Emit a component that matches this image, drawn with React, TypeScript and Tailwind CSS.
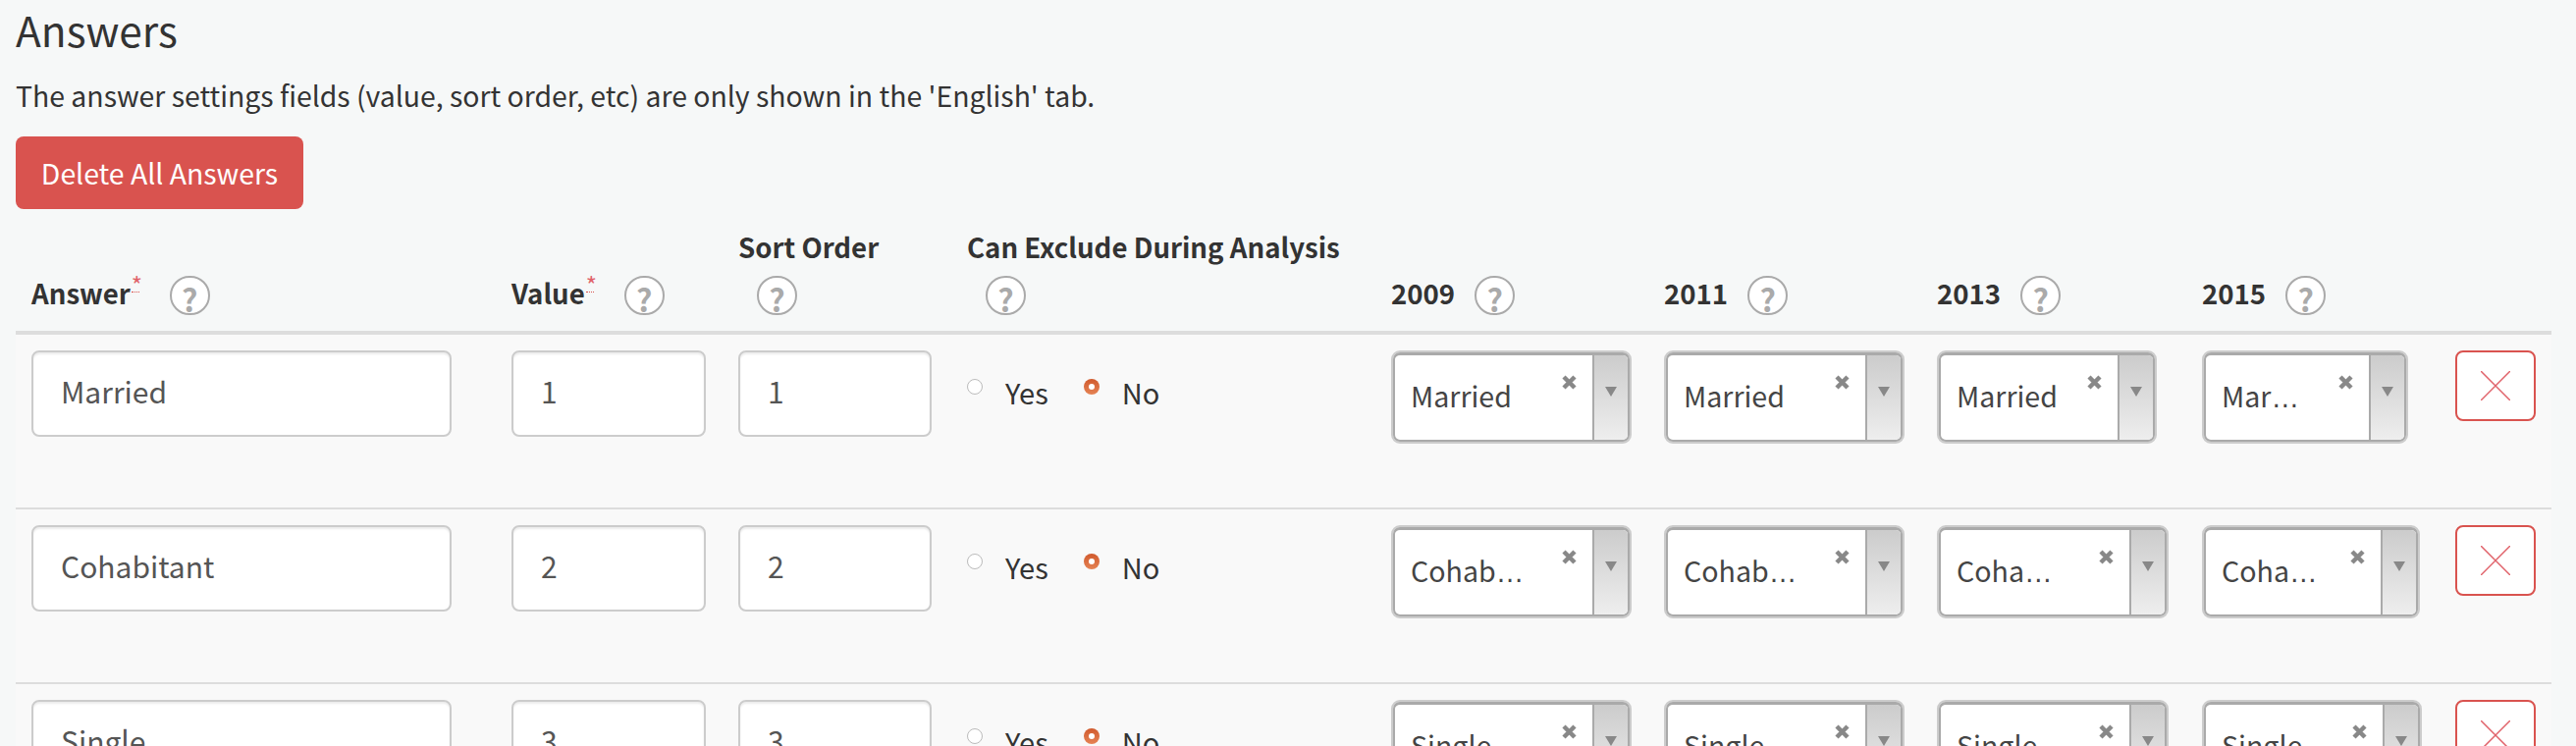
import { useState } from 'react'

type Choice = { label: string; cut?: boolean; width: string }

type Row = {
  answer: string
  value: string
  selects: Choice[]
}

const rows: Row[] = [
  {
    answer: 'Married',
    value: '1',
    selects: [
      { label: 'Married', width: 'w-[245px]' },
      { label: 'Married', width: 'w-[245px]' },
      { label: 'Married', width: 'w-[224px]' },
      { label: 'Mar', cut: true, width: 'w-[210px]' },
    ],
  },
  {
    answer: 'Cohabitant',
    value: '2',
    selects: [
      { label: 'Cohab', cut: true, width: 'w-[245px]' },
      { label: 'Cohab', cut: true, width: 'w-[245px]' },
      { label: 'Coha', cut: true, width: 'w-[236px]' },
      { label: 'Coha', cut: true, width: 'w-[222px]' },
    ],
  },
  {
    answer: 'Single',
    value: '3',
    selects: [
      { label: 'Single', width: 'w-[245px]' },
      { label: 'Single', width: 'w-[245px]' },
      { label: 'Single', width: 'w-[236px]' },
      { label: 'Single', width: 'w-[224px]' },
    ],
  },
]

function Help({ className = '' }: { className?: string }) {
  return (
    <span
      className={`flex h-[40px] w-[41px] shrink-0 items-end justify-center rounded-full border-2 border-[#aaa] bg-white text-[32px] leading-[30px] font-bold text-[#aaa] ${className}`}
    >
      ?
    </span>
  )
}

function Required() {
  return (
    <span className="relative ml-[1px] inline-block h-[20px] w-[8px] self-start border-b border-dotted border-[#d9534f] text-[24px] leading-[24px] font-normal text-[#e0626a]">
      *
    </span>
  )
}

function Select({ label, cut, width }: Choice) {
  return (
    <div className={`${width} h-[95px] rounded-[9px] border-2 border-[#ccc]`}>
      <div className="flex h-full overflow-hidden rounded-[7px] border-2 border-t-[3px] border-[#aaa] bg-white">
        <div className="relative min-w-0 flex-1">
          <div className="whitespace-nowrap pt-[21px] pl-[16px] text-[28.6px] leading-[40px] text-[#444]">
            {label}
            {cut && <span className="font-['Liberation_Sans',sans-serif]">…</span>}
          </div>
          <svg className="absolute top-[20px] right-[16px] h-[15px] w-[15px]" viewBox="0 0 15 15">
            <path d="M2 2L13 13M13 2L2 13" stroke="#888" strokeWidth="4.5" />
          </svg>
        </div>
        <div className="flex w-[36px] shrink-0 justify-center border-l-2 border-[#aaa] bg-gradient-to-b from-[#ccc] to-[#eee] pt-[32px]">
          <svg className="h-[10px] w-[12px]" viewBox="0 0 12 10">
            <path d="M0 0H12L6 10Z" fill="#888" />
          </svg>
        </div>
      </div>
    </div>
  )
}

function Radio({ checked, label, onClick }: { checked: boolean; label: string; onClick: () => void }) {
  return (
    <label className="flex items-start" onClick={onClick}>
      <span
        className={
          checked
            ? 'mt-[29px] flex h-[16px] w-[16px] items-center justify-center rounded-full bg-gradient-to-b from-[#d0592c] to-[#e58354]'
            : 'mt-[29px] h-[16px] w-[16px] rounded-full border border-[#bbb] bg-white'
        }
      >
        {checked && <span className="h-[6px] w-[6px] rounded-full bg-white" />}
      </span>
      <span className="mt-[22px] ml-[23px] text-[29px] leading-[40px] text-[#333]">{label}</span>
    </label>
  )
}

function AnswerRow({ row }: { row: Row }) {
  const [exclude, setExclude] = useState(false)
  const cell = 'h-[178px] border-b-2 border-[#ddd] p-4 align-top'
  const input =
    'h-[88px] rounded-[8px] border-2 border-[#ccc] bg-white px-[28px] pb-[7px] text-[30px] text-[#555] shadow-[inset_0_2px_2px_rgba(0,0,0,0.08)] outline-none'

  return (
    <tr className="bg-[#f9f9f9]">
      <td className={cell}>
        <input className={`${input} w-[428px]`} defaultValue={row.answer} />
      </td>
      <td className={cell}>
        <input className={`${input} w-[198px]`} defaultValue={row.value} />
      </td>
      <td className={cell}>
        <input className={`${input} w-[197px]`} defaultValue={row.value} />
      </td>
      <td className={cell}>
        <div className="flex gap-[36px]">
          <Radio checked={exclude} label="Yes" onClick={() => setExclude(true)} />
          <Radio checked={!exclude} label="No" onClick={() => setExclude(false)} />
        </div>
      </td>
      {row.selects.map((s, i) => (
        <td key={i} className={cell}>
          <Select {...s} />
        </td>
      ))}
      <td className={cell}>
        <button className="flex h-[72px] w-[82px] items-center justify-center rounded-[8px] border-2 border-[#d9534f] bg-white">
          <svg className="h-[30px] w-[30px]" viewBox="0 0 30 30">
            <path d="M0 0L30 30M30 0L0 30" stroke="#e0626a" strokeWidth="1.5" />
          </svg>
        </button>
      </td>
    </tr>
  )
}

export default function App() {
  const th = 'border-b-4 border-[#ddd] px-4 pb-[16px] align-bottom text-left text-[27.6px] leading-[40px] font-semibold text-[#333]'
  const years = ['2009', '2011', '2013', '2015']

  return (
    <div className="h-screen overflow-hidden bg-[#f6f8f8] px-4 font-['Noto_Sans_CJK_SC',sans-serif]">
      <h2 className="text-[42.4px] leading-[60px] font-normal text-[#333]">Answers</h2>
      <p className="mt-[17px] text-[28.4px] leading-[40px] text-[#333]">
        The answer settings fields (value, sort order, etc) are only shown in the 'English' tab.
      </p>
      <button className="mt-[22px] h-[74px] w-[293px] rounded-[8px] bg-[#d9534f] text-[28.4px] text-white">
        Delete All Answers
      </button>

      <table className="mt-[18px] w-[2583px] table-fixed border-separate border-spacing-0">
        <colgroup>
          <col className="w-[489px]" />
          <col className="w-[231px]" />
          <col className="w-[233px]" />
          <col className="w-[432px]" />
          <col className="w-[278px]" />
          <col className="w-[278px]" />
          <col className="w-[270px]" />
          <col className="w-[258px]" />
          <col className="w-[114px]" />
        </colgroup>
        <thead>
          <tr>
            <th className={th}>
              <div className="flex items-end">
                <span className="mb-[3px]">Answer</span>
                <Required />
                <Help className="ml-[31px]" />
              </div>
            </th>
            <th className={th}>
              <div className="flex items-end">
                <span className="mb-[3px]">Value</span>
                <Required />
                <Help className="ml-[31px]" />
              </div>
            </th>
            <th className={th}>
              Sort Order
              <Help className="mt-[10px] ml-[19px]" />
            </th>
            <th className={th}>
              <span className="whitespace-nowrap">Can Exclude During Analysis</span>
              <Help className="mt-[10px] ml-[19px]" />
            </th>
            {years.map((y) => (
              <th key={y} className={th}>
                <div className="flex items-end">
                  <span className="mb-[3px]">{y}</span>
                  <Help className="ml-[20px]" />
                </div>
              </th>
            ))}
            <th className={th} />
          </tr>
        </thead>
        <tbody>
          {rows.map((r) => (
            <AnswerRow key={r.answer} row={r} />
          ))}
        </tbody>
      </table>
    </div>
  )
}
